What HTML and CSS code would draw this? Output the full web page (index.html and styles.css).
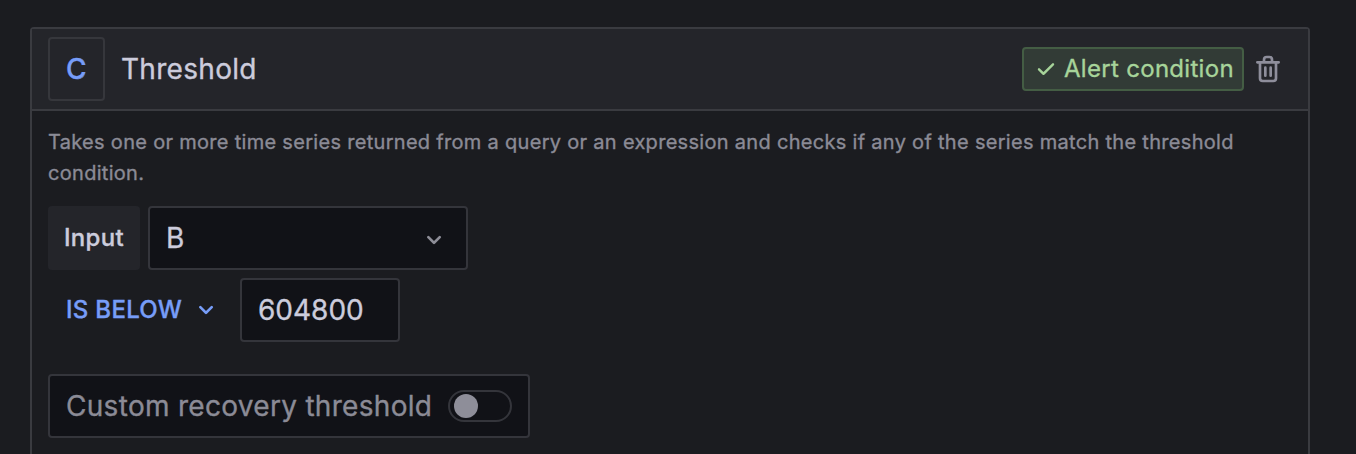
FILE: index.html
```html
<!DOCTYPE html>
<html lang="en">
<head>
<meta charset="utf-8">
<title>Threshold</title>
<link rel="stylesheet" href="styles.css">
</head>
<body>
<section class="card">
  <header class="card-header">
    <div class="ref-id">C</div>
    <div class="title">Threshold</div>
    <div class="badge">
      <svg class="check" viewBox="0 0 24 24"><path d="M18.71,7.21a1,1,0,0,0-1.42,0L9.84,14.67,6.71,11.53A1,1,0,1,0,5.29,13l3.84,3.84a1,1,0,0,0,1.42,0l8.16-8.16A1,1,0,0,0,18.71,7.21Z"/></svg>
      <span>Alert condition</span>
    </div>
    <svg class="trash" viewBox="0 0 24 24"><path d="M10,18a1,1,0,0,0,1-1V11a1,1,0,0,0-2,0v6A1,1,0,0,0,10,18ZM20,6H16V5a3,3,0,0,0-3-3H11A3,3,0,0,0,8,5V6H4A1,1,0,0,0,4,8H5V19a3,3,0,0,0,3,3h8a3,3,0,0,0,3-3V8h1a1,1,0,0,0,0-2ZM10,5a1,1,0,0,1,1-1h2a1,1,0,0,1,1,1V6H10Zm7,14a1,1,0,0,1-1,1H8a1,1,0,0,1-1-1V8H17Zm-3-1a1,1,0,0,0,1-1V11a1,1,0,0,0-2,0v6A1,1,0,0,0,14,18Z"/></svg>
  </header>
  <div class="card-body">
    <p class="description">Takes one or more time series returned from a query or an expression and checks if any of the series match the threshold condition.</p>
    <div class="row">
      <div class="label">Input</div>
      <div class="field select">
        <span>B</span>
        <svg class="chevron" viewBox="0 0 24 24"><path d="M17,9.17a1,1,0,0,0-1.41,0L12,12.71,8.46,9.17a1,1,0,0,0-1.41,0,1,1,0,0,0,0,1.42l4.24,4.24a1,1,0,0,0,1.42,0L17,10.59A1,1,0,0,0,17,9.17Z"/></svg>
      </div>
    </div>
    <div class="row">
      <div class="operator">
        <span>IS BELOW</span>
        <svg class="chevron" viewBox="0 0 24 24"><path d="M17,9.17a1,1,0,0,0-1.41,0L12,12.71,8.46,9.17a1,1,0,0,0-1.41,0,1,1,0,0,0,0,1.42l4.24,4.24a1,1,0,0,0,1.42,0L17,10.59A1,1,0,0,0,17,9.17Z"/></svg>
      </div>
      <div class="field number">604800</div>
    </div>
    <div class="field recovery">
      <span>Custom recovery threshold</span>
      <div class="toggle"><div class="knob"></div></div>
    </div>
  </div>
</section>
</body>
</html>
```
FILE: styles.css
```css
* { box-sizing: border-box; }
body {
  display: flow-root;
  margin: 0;
  height: 454px;
  overflow: hidden;
  background: #1b1c20;
  color: #ccccdc;
  font: 400 28px/44px Inter, "Liberation Sans", sans-serif;
  letter-spacing: 0.3px;
  -webkit-text-stroke: 0.35px currentColor;
}
svg { display: block; flex: none; fill: currentColor; }
.card {
  width: 1280px;
  height: 427px;
  margin: 27px 0 0 30px;
  border: 2px solid #3a3b40;
  border-bottom: 0;
  border-radius: 4px 4px 0 0;
}
.card-header {
  display: flex;
  align-items: center;
  height: 82px;
  padding: 0 24px 0 16px;
  background: #24252a;
  border-bottom: 2px solid #3a3b40;
}
.ref-id {
  width: 57px;
  height: 64px;
  border: 2px solid #36373c;
  border-radius: 4px;
  color: #779df8;
  font-weight: 500;
  line-height: 61px;
  text-align: center;
}
.title { margin-left: 16px; }
.badge {
  display: flex;
  align-items: center;
  width: 222px;
  height: 44px;
  margin-left: auto;
  padding-left: 8px;
  gap: 4px;
  background: #323b36;
  border: 2px solid #445d44;
  border-radius: 4px;
  color: #a7d49a;
  font-size: 24px;
  line-height: 40px;
  white-space: nowrap;
}
.check { width: 28px; height: 28px; }
.trash { width: 32px; height: 32px; margin-left: 8px; color: #8e8e9b; }
.card-body { padding: 16px 16px 0; }
.description {
  margin: 0 0 17px;
  color: #8b8b96;
  font-size: 20px;
  line-height: 31px;
}
.row { display: flex; gap: 8px; margin-bottom: 8px; }
.label {
  width: 92px;
  height: 64px;
  background: #24252a;
  border-radius: 4px;
  font-size: 24px;
  font-weight: 500;
  line-height: 64px;
  text-align: center;
}
.field {
  display: flex;
  align-items: center;
  height: 64px;
  padding: 0 16px;
  background: #111217;
  border: 2px solid #34353b;
  border-radius: 4px;
}
.select { width: 320px; justify-content: space-between; }
.chevron { width: 32px; height: 32px; }
.select .chevron { margin-top: 4px; color: #8e8e98; }
.operator {
  display: flex;
  align-items: center;
  justify-content: space-between;
  width: 184px;
  padding: 0 10px 0 18px;
  color: #779df8;
  font-size: 24px;
  font-weight: 500;
}
.number { width: 160px; letter-spacing: 0; }
.recovery {
  width: 482px;
  margin-top: 32px;
  justify-content: space-between;
  color: #8b8b96;
}
.toggle {
  width: 64px;
  height: 32px;
  padding: 2px 4px;
  border: 2px solid #34353b;
  border-radius: 16px;
}
.knob {
  width: 24px;
  height: 24px;
  border-radius: 50%;
  background: #8e8e99;
}
```
